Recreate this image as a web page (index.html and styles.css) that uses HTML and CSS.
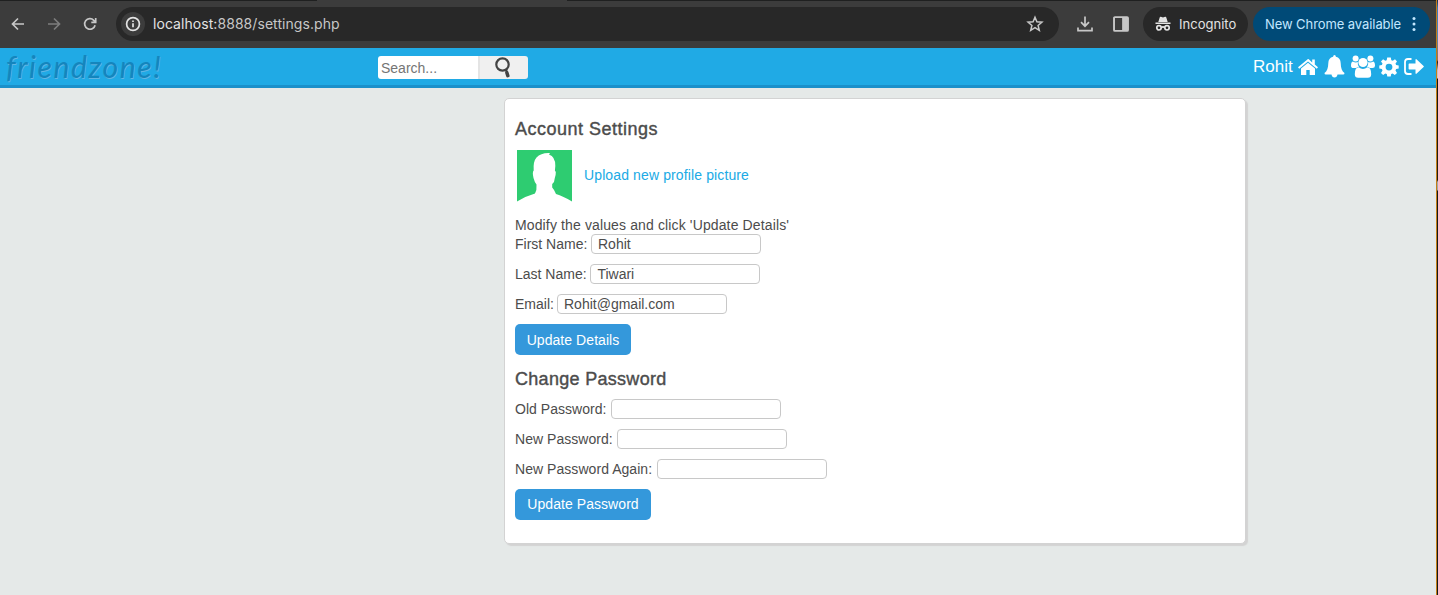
FILE: index.html
```html
<!DOCTYPE html>
<html lang="en">
<head>
<meta charset="utf-8">
<title>Account Settings</title>
<link rel="stylesheet" href="styles.css">
</head>
<body>
<div class="desktop">
<div class="window">
  <header class="chrome">
    <div class="tab-edge"><i class="edge-left"></i><i class="edge-right"></i></div>
    <div class="toolbar">
      <svg class="tool back" viewBox="0 0 16 16"><path d="M14 8H3M8 2.5 2.5 8 8 13.5"/></svg>
      <svg class="tool forward" viewBox="0 0 16 16"><path d="M2 8h11M8 2.5 13.5 8 8 13.5"/></svg>
      <svg class="tool reload" viewBox="0 0 16 16"><path d="M13.1 9.2A5.3 5.3 0 1 1 11.8 4.3L13.5 6M13.7 2v4.4H9.3"/></svg>
      <div class="address">
        <span class="info"><svg viewBox="0 0 16 16"><circle cx="8" cy="8" r="6.4"/><path d="M8 7.2v4M8 4.4v1.6"/></svg></span>
        <span class="url"><b>localhost:</b>8888/settings.php</span>
        <svg class="star" viewBox="0 0 18 18"><path d="m9 2.2 1.9 4.6 5 .4-3.8 3.2 1.2 4.9L9 12.7l-4.3 2.6 1.2-4.9-3.8-3.2 5-.4z"/></svg>
      </div>
      <svg class="download" viewBox="0 0 18 18"><path d="M9 1.5v9.5M5 7.2l4 4 4-4M2 12.5v3.2h14v-3.2"/></svg>
      <svg class="panel" viewBox="0 0 16 16"><rect x="1.800" y="1.900" width="12.400" height="12.200" rx=".8"/><path class="solid" d="M9 2h5v12H9z"/></svg>
      <div class="incognito">
        <svg viewBox="0 0 18 18"><path class="solid" d="M4.300 7 5.700 2.400q.3-.9 1.200-.6L9 2.400l2.100-.6q.9-.3 1.200.6L13.700 7zM1.500 7.500h15v1.600h-15z"/><circle cx="5" cy="12.800" r="2.200"/><circle cx="13" cy="12.800" r="2.200"/><path d="M7.200 12.400q1.800-1 3.600 0"/></svg>
        <span>Incognito</span>
      </div>
      <div class="update"><span>New Chrome available</span><svg viewBox="0 0 4 16"><circle cx="2" cy="2.600" r="1.500"/><circle cx="2" cy="8" r="1.500"/><circle cx="2" cy="13.400" r="1.500"/></svg></div>
    </div>
  </header>
  <nav class="top-bar">
    <a class="logo">friendzone!</a>
    <div class="search">
      <input class="search-text" type="text" placeholder="Search...">
      <span class="search-button"><svg viewBox="0 0 16 22"><circle cx="7.500" cy="7.500" r="6.200"/><path d="M11 12.800l.8 1.200"/><path class="handle" d="m11.800 15.500 1 3.200"/></svg></span>
    </div>
    <div class="links">
      <a class="user">Rohit</a>
      <svg class="home" viewBox="0 0 20 18"><path d="M10 4.700 3 10.500V17h5.300v-5h3.400v5H17v-6.500z"/><path d="M10 1 0 9.300l1.200 1.400L10 3.400l8.800 7.300L20 9.300l-3.200-2.700V1.500h-2.600v2.900L10.800 1.300Q10.400.9 10 1z"/></svg>
      <svg class="bell" viewBox="0 0 20 23"><path d="M10 0q1.300 0 1.400 1.800c3.200.8 4.700 3.100 4.800 6.400.1 4.800 1.200 8 3.800 9.900q0 1.500-1.300 1.500H13q-.5 3-3 3t-3-3H1.300Q0 19.600 0 18.100c2.600-1.900 3.700-5.100 3.800-9.900.1-3.300 1.600-5.600 4.800-6.400Q8.700 0 10 0z"/></svg>
      <svg class="users" viewBox="0 0 24 23"><circle cx="4.600" cy="3.500" r="3"/><circle cx="19.400" cy="3.500" r="3"/><circle cx="12" cy="7.500" r="4.600"/><path d="M1.800 6.600q3 1.700 5 .5-.4 2.800 1.300 4.700-1.700 0-2.900 1.300H2.600Q0 13.100 0 10.800 0 7 1.800 6.600zM22.200 6.600q-3 1.700-5 .5.4 2.800-1.300 4.700 1.700 0 2.900 1.300h2.600q2.600 0 2.600-2.300 0-3.800-1.800-4.200zM7.700 12.300q4.300 3.400 8.600 0 3.900.2 3.900 6.900 0 3.500-3.400 3.500H7.200q-3.400 0-3.400-3.500 0-6.700 3.900-6.900z"/></svg>
      <svg class="gear" viewBox="0 0 20 20"><path fill-rule="evenodd" d="M8.200.5h3.600l.5 2.700 1.500.6L16 2.200 18 4.400l-1.500 2.200.6 1.500 2.600.5v3l-2.600.5-.6 1.500L18 15.900l-2.200 2.100-2.200-1.500-1.400.6-.5 2.500H8.300l-.5-2.500-1.500-.6L4.100 18 2 15.900l1.500-2.300-.6-1.500-2.600-.5v-3l2.600-.5.6-1.500L2 4.400l2.100-2.200 2.200 1.600 1.400-.6zM10 6.700a3.400 3.400 0 1 0 0 6.800 3.400 3.400 0 0 0 0-6.800z"/></svg>
      <svg class="logout" viewBox="0 0 20 17"><path class="outline" d="M7.500 1H4Q1 1 1 4v9q0 3 3 3h3.500"/><path d="M5.300 5.500h6.200V2q.1-1.400 1.200-.6l6.900 6.500q.5.600 0 1.200l-6.900 6.500q-1.100.8-1.200-.6v-3.500H5.300q-.7 0-.7-.7V6.200q0-.7.7-.7z"/></svg>
    </div>
  </nav>
  <main class="page">
    <section class="card">
      <h4 class="title title-account">Account Settings</h4>
      <div class="profile">
        <svg class="avatar" viewBox="0 0 55 52"><path class="green" d="M0 0h55v51.500Q46 46 39 44q-1.500-4-3.800-6.500V34q2.500-2 2.600-6 1.100-3 1-6l-.9-1.500Q39.500 10 34.800 6L32 4.400 33 3q-9-.5-13.500 4.500-3.500 4-2.800 13-1.600 1.500-.2 7.500 1 4 3 6.500.5 5.500-1.500 9Q9 46 0 51.500z"/></svg>
        <a class="upload">Upload new profile picture</a>
      </div>
      <p class="hint">Modify the values and click 'Update Details'</p>
      <form class="details">
        <label class="field"><span class="w-first">First Name:</span><input type="text" value="Rohit"></label>
        <label class="field"><span class="w-last">Last Name:</span><input type="text" value="Tiwari"></label>
        <label class="field"><span class="w-email">Email:</span><input type="text" value="Rohit@gmail.com"></label>
        <button class="save save-details" type="button">Update Details</button>
      </form>
      <h4 class="title">Change Password</h4>
      <form class="passwords">
        <label class="field"><span class="w-old">Old Password:</span><input type="password"></label>
        <label class="field"><span class="w-new">New Password:</span><input type="password"></label>
        <label class="field"><span class="w-again">New Password Again:</span><input type="password"></label>
        <button class="save save-password" type="button">Update Password</button>
      </form>
    </section>
  </main>
</div>
<div class="backdrop"></div>
</div>
</body>
</html>
```
FILE: styles.css
```css
* { box-sizing: border-box; }
body { margin: 0; overflow: hidden; background: #e5e9e8; color: #4c4c4c; font: 14px/18px "Liberation Sans", Arial, sans-serif; }
svg { display: block; flex: none; fill: none; }
.desktop { display: flex; width: 1438px; height: 595px; }
.window { width: 1436px; flex: none; }
.backdrop { width: 2px; border-left: 1px solid #c47e16; background: linear-gradient(#15294a 0, #3a79bd 8px, #5685b8 35px, #95735b 60px, #191919 62px, #b9bec5 70px, #c6c8cc 78px, #141414 79px, #221d12 180px, #a4a9b0 182px, #9ba1a9 190px, #14171a 191px); }

.chrome { display: flex; flex-direction: column; height: 48px; background: #3c3c3c; }
.tab-edge { display: flex; justify-content: space-between; height: 1px; }
.edge-left { width: 317px; background: #1f2020; }
.edge-right { width: 869px; background: #1f2020; }
.toolbar { display: flex; align-items: center; height: 46px; padding-left: 10px; font-family: Inter, sans-serif; }
.toolbar svg { stroke: #c7c7c7; stroke-width: 1.7; }
.toolbar .solid { fill: #c7c7c7; stroke: none; }
.tool { width: 16px; height: 16px; }
.toolbar .forward { margin-left: 20px; stroke: #7d7d7d; }
.reload { margin-left: 20px; }
.address { display: flex; align-items: center; width: 943px; height: 34px; margin-left: 18px; padding: 0 15px 0 5px; border-radius: 17px; background: #282828; }
.info { display: flex; align-items: center; justify-content: center; width: 24px; height: 24px; border-radius: 50%; background: #3c3c3c; }
.info svg { width: 16px; height: 16px; stroke: #e3e3e3; }
.url { flex: 1; margin-left: 8px; color: #c7c7c7; font-size: 14px; letter-spacing: 0.06px; }
.url b { color: #e3e3e3; font-weight: 400; }
.star { width: 18px; height: 18px; }
.toolbar .star { stroke-width: 1.5; }
.download { width: 18px; height: 18px; margin-left: 17px; }
.panel { width: 18px; height: 18px; margin-left: 18px; }
.incognito { display: flex; align-items: center; width: 105px; height: 34px; margin-left: 13px; padding-left: 11px; border-radius: 17px; background: #282828; color: #e3e3e3; font-size: 13px; letter-spacing: 0.02px; }
.incognito svg { width: 18px; height: 18px; margin-right: 7px; stroke: #e3e3e3; }
.incognito .solid { fill: #e3e3e3; }
.update { display: flex; align-items: center; width: 177px; height: 34px; margin-left: 5px; padding-left: 12px; border-radius: 17px; background: #004a77; color: #c2e7ff; font-size: 13px; letter-spacing: -0.08px; white-space: nowrap; }
.update span { width: 147px; }
.toolbar .update svg { width: 4px; height: 16px; fill: #c2e7ff; stroke: none; }

.top-bar { display: flex; height: 40px; border-bottom: 3px solid #1b90ca; background: #20aae5; }
.logo { flex: none; width: 378px; padding: 1px 0 0 6px; color: #1485bd; font: italic 400 30px/34px Lato, sans-serif; letter-spacing: 1.6px; text-shadow: 0.5px 1px 0 #62b5e2; }
.search { display: flex; flex: none; width: 150px; height: 23px; margin-top: 8px; border-radius: 3px; overflow: hidden; }
.search-text { width: 100px; padding: 0 3px; border: 0; font: 14px "Liberation Sans", sans-serif; letter-spacing: 0; }
.search-text::placeholder { color: #757575; }
.search-button { display: flex; width: 50px; padding: 1px 0 0 15px; border-left: 2px solid #e4e4e4; background: #f0f0f0; }
.search-button svg { width: 16px; height: 22px; stroke: #444; stroke-width: 2.2; }
.search-button .handle { stroke-width: 3.5; stroke-linecap: round; }
.links { display: flex; flex: none; align-items: center; margin-left: 725px; color: #fff; }
.links svg { fill: #fff; }
.user { width: 45px; font-size: 17px; letter-spacing: 0; }
.home { width: 20px; height: 18px; }
.bell { width: 21px; height: 23px; margin-left: 6px; }
.users { width: 24px; height: 23px; margin-left: 6px; }
.gear { width: 20px; height: 20px; margin-left: 4px; }
.logout { width: 20px; height: 17px; margin-left: 5px; }
.links .outline { fill: none; stroke: #fff; stroke-width: 1.8; }

.page { padding: 10px 0 0 504px; }
.card { width: 742px; height: 446px; padding: 20px 10px; border: 1px solid #d3d3d3; border-radius: 5px; background: #fff; box-shadow: 2px 2px 1px #d3d3d3; }
.title { margin: 0; font-size: 18px; line-height: 21px; font-weight: 400; letter-spacing: 0.3px; -webkit-text-stroke: 0.4px #4c4c4c; }
.title-account { letter-spacing: 0.5px; }
.profile { display: flex; align-items: center; height: 52px; margin: 10px 0 0 2px; }
.avatar { width: 55px; height: 52px; background: #fff; }
.green { fill: #2ecc71; }
.upload { margin: -3px 0 0 12px; color: #20aae5; letter-spacing: 0.12px; }
.hint { margin: 15px 0 0; line-height: 17px; letter-spacing: 0.13px; }
.field { display: flex; height: 20px; margin-bottom: 10px; line-height: 20px; white-space: nowrap; }
.field input { width: 170px; height: 20px; padding: 0 6px; border: 1px solid #c8c8c8; border-radius: 4px; background: #fff; color: #4c4c4c; font: 14px "Liberation Sans", sans-serif; }
.w-first { width: 76px; }
.w-last { width: 75.4px; }
.w-email { width: 42px; }
.w-old { width: 95.6px; letter-spacing: 0.04px; }
.w-new { width: 102px; letter-spacing: 0.04px; }
.w-again { width: 141.6px; letter-spacing: 0.05px; }
.save { display: block; height: 31px; padding: 0; border: 0; border-radius: 5px; background: #3498db; color: #fff; font: 14px "Liberation Sans", sans-serif; letter-spacing: 0.06px; }
.save-details { width: 116px; margin-bottom: 14px; }
.save-password { width: 136px; }
.passwords { margin-top: 8.6px; }
```
